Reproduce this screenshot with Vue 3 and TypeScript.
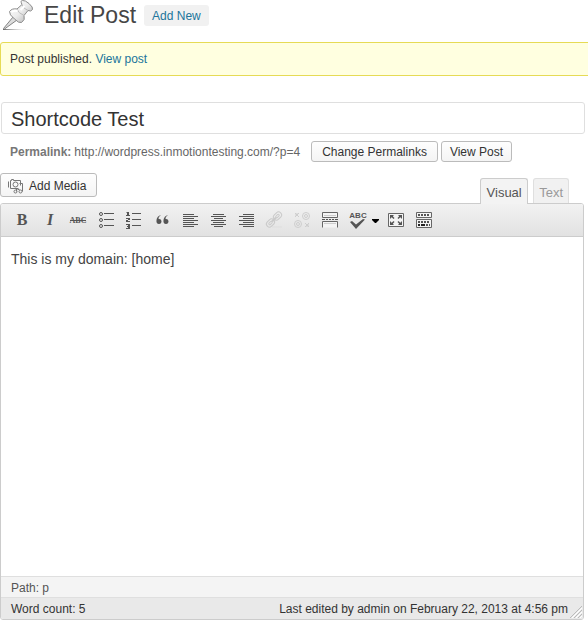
<script setup lang="ts">
import { ref } from 'vue'

const title = ref('Shortcode Test')
const content = ref('This is my domain: [home]')
const activeTab = ref<'visual' | 'text'>('visual')

const alignments = [
  { label: 'Align Left', bars: [[3, 11], [3, 15], [3, 11], [3, 15], [3, 11], [3, 15], [3, 11]] },
  { label: 'Align Center', bars: [[5, 11], [3, 15], [6, 9], [3, 15], [5, 11], [3, 15], [6, 9]] },
  { label: 'Align Right', bars: [[7, 11], [3, 15], [7, 11], [3, 15], [7, 11], [3, 15], [7, 11]] },
]
</script>

<template>
  <main class="page">
    <header class="heading">
      <svg class="pin" viewBox="0 0 32 32" aria-hidden="true">
        <defs>
          <linearGradient id="pin-metal" x1="0" y1="0" x2="1" y2="1">
            <stop offset="0" stop-color="#fff" />
            <stop offset=".5" stop-color="#ececec" />
            <stop offset="1" stop-color="#a8a8a8" />
          </linearGradient>
          <linearGradient id="pin-shadow">
            <stop offset="0" stop-color="#666" />
            <stop offset="1" stop-color="#ccc" stop-opacity="0" />
          </linearGradient>
        </defs>
        <path d="M1 29h25v1H1z" fill="url(#pin-shadow)" />
        <path d="M11 17L1.500 28.500l1 .5L15 20z" fill="#ddd" stroke="#777" stroke-width=".9" />
        <path d="M7.500 11.500Q10 8 15 9L20 4.500Q18 .5 20.500 .5Q23 0 27 3.500Q31.500 7.500 30.500 9.500Q29 12 26 10.500L22 15.500Q23.500 20 19.500 22.500Q17 23.500 12.500 19Q7 14.500 7.500 11.500z" fill="url(#pin-metal)" stroke="#8c8c8c" />
        <path d="M15 9q1 4 7 6.500M20 4.500q1 4 6 6" fill="none" stroke="#bbb" />
        <path d="M18.500 10l4-4M9.500 12q3-2 6-1" fill="none" stroke="#fff" stroke-width="2" />
      </svg>
      <h1>Edit Post</h1>
      <a href="#new" class="add-new">Add New</a>
    </header>

    <p class="notice">Post published. <a href="#post">View post</a></p>

    <form class="post" @submit.prevent>
      <input v-model="title" class="title" type="text" aria-label="Post title">

      <div class="permalink">
        <strong>Permalink:</strong>
        <span class="url">http://wordpress.inmotiontesting.com/?p=4</span>
        <button type="button" class="button">Change Permalinks</button>
        <button type="button" class="button">View Post</button>
      </div>

      <div class="tools">
        <button type="button" class="button media">
          <svg viewBox="0 0 16 16" aria-hidden="true" fill="none" stroke="#777">
            <path d="M10.500 10.500h-8v-8h1v-1h2v1h7v5M.5 3.500v6" />
            <circle cx="7.500" cy="6.500" r="2.500" />
            <path d="M8.500 13.500v-3M14.500 13.500v-8h-3" />
            <circle cx="7.500" cy="13.500" r="1.500" /><circle cx="12.500" cy="13.500" r="1.500" />
            <path d="M9.500 11.500h2" />
          </svg>
          Add Media
        </button>
        <div class="tabs">
          <button type="button" :class="{ active: activeTab === 'visual' }" @click="activeTab = 'visual'">Visual</button>
          <button type="button" :class="{ active: activeTab === 'text' }" @click="activeTab = 'text'">Text</button>
        </div>
      </div>

      <section class="editor">
        <div class="toolbar" role="toolbar" aria-label="Formatting">
          <button type="button" aria-label="Bold">
            <svg viewBox="0 0 20 20"><text x="10" y="15" text-anchor="middle" class="serif" font-size="16" font-weight="bold">B</text></svg>
          </button>
          <button type="button" aria-label="Italic">
            <svg viewBox="0 0 20 20"><text x="10" y="15" text-anchor="middle" class="serif" font-size="16" font-weight="bold" font-style="italic">I</text></svg>
          </button>
          <button type="button" aria-label="Strikethrough">
            <svg viewBox="0 0 20 20">
              <text x="10" y="13" text-anchor="middle" class="serif" font-size="8" font-weight="bold">ABC</text>
              <path d="M2 10h16v1H2z" />
            </svg>
          </button>
          <button type="button" aria-label="Unordered list">
            <svg viewBox="0 0 20 20">
              <g fill="none" stroke="#555"><circle cx="5" cy="4" r="1.500" /><circle cx="5" cy="10" r="1.500" /><circle cx="5" cy="16" r="1.500" /></g>
              <path d="M8 3h10v1H8zM8 9h10v1H8zM8 15h10v1H8z" />
            </svg>
          </button>
          <button type="button" aria-label="Ordered list">
            <svg viewBox="0 0 20 20">
              <path d="M3 2h2v3h1v1H2V5h1V3H2zM2 8h4v2H4v1h2v1H2v-2h2V9H2zM2 14h4v5H2v-1h2v-1H3v-1h1v-1H2z" />
              <path d="M8 3h9v1H8zM8 9h9v1H8zM8 15h9v1H8z" />
            </svg>
          </button>
          <button type="button" aria-label="Blockquote">
            <svg viewBox="0 0 20 20"><path d="M9 5Q6 7 6.500 9Q9 8.500 9.500 11Q9.500 14 7 14Q4 14 4.500 10Q5 6 9 5zM16 5Q13 7 13.500 9Q16 8.500 16.500 11Q16.500 14 14 14Q11 14 11.500 10Q12 6 16 5z" /></svg>
          </button>
          <button v-for="item in alignments" :key="item.label" type="button" :aria-label="item.label">
            <svg viewBox="0 0 20 20">
              <rect v-for="(bar, row) in item.bars" :key="row" :x="bar[0]" :y="4 + row * 2" :width="bar[1]" height="1" />
            </svg>
          </button>
          <button type="button" aria-label="Insert link" disabled>
            <svg viewBox="0 0 20 20" fill="none">
              <path d="M8 17h10" stroke="#ddd" />
              <g stroke="#cacaca">
                <rect x="2" y="10" width="9" height="6" rx="3" transform="rotate(-45 6.500 13)" />
                <rect x="9" y="3" width="9" height="6" rx="3" transform="rotate(-45 13.500 6)" />
                <rect x="4.500" y="12" width="4" height="2" rx="1" transform="rotate(-45 6.500 13)" />
                <rect x="11.500" y="5" width="4" height="2" rx="1" transform="rotate(-45 13.500 6)" />
                <path d="M8 11.500l4-4" stroke-width="2" />
              </g>
            </svg>
          </button>
          <button type="button" aria-label="Remove link" disabled>
            <svg viewBox="0 0 20 20" fill="none" stroke="#cecece">
              <path d="M3 3l4 4M7 3l-4 4M13 13l4 4M17 13l-4 4M5 3v1M3 5h1M15 16v1M16 15h1" />
              <circle cx="14" cy="6" r="3.500" /><circle cx="14" cy="6" r="1.500" />
              <circle cx="6" cy="14" r="3.500" /><circle cx="6" cy="14" r="1.500" />
            </svg>
          </button>
          <button type="button" aria-label="Insert More tag">
            <svg viewBox="0 0 20 20">
              <g class="panel"><path d="M2.500 2.500h15v5h-15zM2.500 17.500v-6h15v6" /></g>
              <path d="M4 5h12v1H4zM4 13h12v1H4z" fill="#ccc" />
              <path d="M2 9h3v1H2zM6 9h2v1H6zM9 9h2v1H9zM12 9h2v1h-2zM15 9h3v1h-3z" />
            </svg>
          </button>
          <button type="button" aria-label="Spellcheck">
            <svg viewBox="0 0 20 20">
              <text x="10" y="8" text-anchor="middle" class="sans" font-size="8" font-weight="bold">ABC</text>
              <path d="M2 12l2-1 4 3.500L15 9l2 .5L8 19z" />
            </svg>
          </button>
          <button type="button" class="drop" aria-label="Spellcheck options">
            <svg viewBox="0 0 7 20"><path d="M0 9h7v1l-3 3h-1L0 10z" fill="#000" /></svg>
          </button>
          <button type="button" aria-label="Full screen">
            <svg viewBox="0 0 20 20">
              <path class="panel" d="M2.500 3.500h15v13h-15z" />
              <path d="M4 5h4L6.800 6.300 8.500 8l-1 1L5.700 7.300 4 9zM16 5h-4l1.200 1.300L11.500 8l1 1 1.800-1.700L16 9zM4 15h4l-1.200-1.300L8.500 12l-1-1-1.800 1.700L4 11zM16 15h-4l1.200-1.300L11.500 12l1-1 1.800 1.700L16 11z" />
            </svg>
          </button>
          <button type="button" aria-label="Show kitchen sink">
            <svg viewBox="0 0 20 20">
              <path class="panel" d="M2.500 2.500h15v5h-15zM2.500 9.500h15v8h-15z" />
              <path d="M4 5h12M4 12h12M12 15h4" stroke="#555" stroke-width="2" stroke-dasharray="2 1" />
              <path d="M4 14h2v2H4zM7 14h4v2H7z" fill="#222" />
            </svg>
          </button>
        </div>

        <textarea v-model="content" class="content" aria-label="Post content"></textarea>

        <div class="path">Path: p</div>
        <footer class="status">
          <span>Word count: 5</span>
          <span class="edited">Last edited by admin on February 22, 2013 at 4:56 pm</span>
          <svg class="grip" viewBox="0 0 12 12" aria-hidden="true">
            <path d="M0 12L12 0M4 12l8-8M8 12l4-4" stroke="#bbb" />
            <path d="M2 12L12 2M6 12l6-6M10 12l2-2" stroke="#fff" />
          </svg>
        </footer>
      </section>
    </form>
  </main>
</template>

<style>
body {
  margin: 0;
  background: #fff;
}
</style>

<style scoped>
.page {
  color: #333;
  font: 12px/16px "Liberation Sans", Arial, sans-serif;
  overflow: hidden;
}

.page * {
  box-sizing: border-box;
}

a {
  color: #21759b;
  text-decoration: none;
}

button,
input,
textarea {
  margin: 0;
  font-family: inherit;
}

.heading {
  display: flex;
  align-items: center;
  height: 32px;
  margin-bottom: 10px;
}

.pin {
  width: 32px;
  height: 32px;
  margin: 0 10px 0 2px;
}

h1 {
  margin: 0;
  padding-bottom: 2px;
  color: #464646;
  font-size: 23px;
  font-weight: 400;
  line-height: 30px;
}

.add-new {
  padding: 3px 8px 2px;
  margin: 0 0 2px 8px;
  background: #f1f1f1;
  border-radius: 3px;
}

.notice {
  margin: 0 -4px 26px 0;
  padding: 8px 9px;
  background: #ffffe0;
  border: 1px solid #e6db55;
  border-radius: 3px;
}

.title {
  display: block;
  width: calc(100% - 4px);
  height: 32px;
  margin-left: 1px;
  padding: 2px 9px 0;
  color: #333;
  background: #fff;
  border: 1px solid #dfdfdf;
  border-radius: 3px;
  font-size: 20px;
}

.permalink {
  display: flex;
  align-items: center;
  gap: 3px;
  margin: 7px 10px 11px;
  color: #666;
}

.permalink strong {
  color: #777;
}

.url {
  margin-right: 8px;
}

.button {
  height: 21px;
  padding: 0 8px;
  color: #333;
  background: linear-gradient(#fefefe, #f4f4f4);
  border: 1px solid #bbb;
  border-radius: 3px;
  font-size: 12px;
  line-height: 16px;
  white-space: nowrap;
}

.permalink .button {
  padding: 0 10px;
}

.permalink .button:last-child {
  padding: 0 8px;
}

.tools {
  display: flex;
  align-items: flex-start;
  justify-content: space-between;
  height: 30px;
}

.tools .media {
  display: flex;
  align-items: center;
  gap: 5px;
  height: 24px;
  padding: 2px 10px 0 7px;
}

.media svg {
  width: 16px;
  height: 16px;
}

.tabs {
  display: flex;
  gap: 5px;
  padding: 5px 19px 0 0;
}

.tabs button {
  height: 25px;
  padding: 2px 5px 0;
  color: #999;
  background: #f1f1f1;
  border: 1px solid #dfdfdf;
  border-bottom: 0;
  border-radius: 3px 3px 0 0;
  font-size: 13px;
}

.tabs .active {
  z-index: 1;
  min-width: 48px;
  height: 26px;
  color: #555;
  background: #f3f3f3;
  border-color: #ccc;
}

.editor {
  margin-right: 4px;
  border: 1px solid #ccc;
  border-radius: 3px;
  overflow: hidden;
}

.toolbar {
  display: flex;
  align-items: center;
  height: 33px;
  padding-left: 7px;
  background: linear-gradient(#f2f2f2, #e2e2e2);
  border-bottom: 1px solid #ccc;
}

.toolbar button {
  display: flex;
  justify-content: center;
  width: 28px;
  padding: 0;
  background: none;
  border: 0;
}

.toolbar svg {
  width: 20px;
  height: 20px;
  fill: #555;
}

.toolbar .drop {
  justify-content: flex-start;
  width: 10px;
}

.toolbar .drop svg {
  width: 7px;
}

.toolbar button:disabled svg {
  fill: none;
}

.panel {
  fill: #f4f4f4;
  stroke: #666;
}

.serif {
  font-family: "Liberation Serif", "Times New Roman", serif;
}

.sans {
  font-family: "Liberation Sans", Arial, sans-serif;
}

.content {
  display: block;
  width: 100%;
  height: 339px;
  padding: 12px 10px;
  color: #444;
  background: #fff;
  border: 0;
  resize: none;
  font-size: 14px;
  line-height: 20px;
}

.path {
  padding: 3px 10px 1px;
  color: #555;
  background: #f4f4f4;
  border-top: 1px solid #dfdfdf;
}

.status {
  display: flex;
  align-items: center;
  height: 22px;
  padding-left: 10px;
  background: #e9e9e9;
  border-top: 1px solid #dfdfdf;
}

.edited {
  margin-left: auto;
}

.grip {
  align-self: flex-end;
  width: 12px;
  height: 12px;
  margin: 0 1px 1px 2px;
}
</style>
